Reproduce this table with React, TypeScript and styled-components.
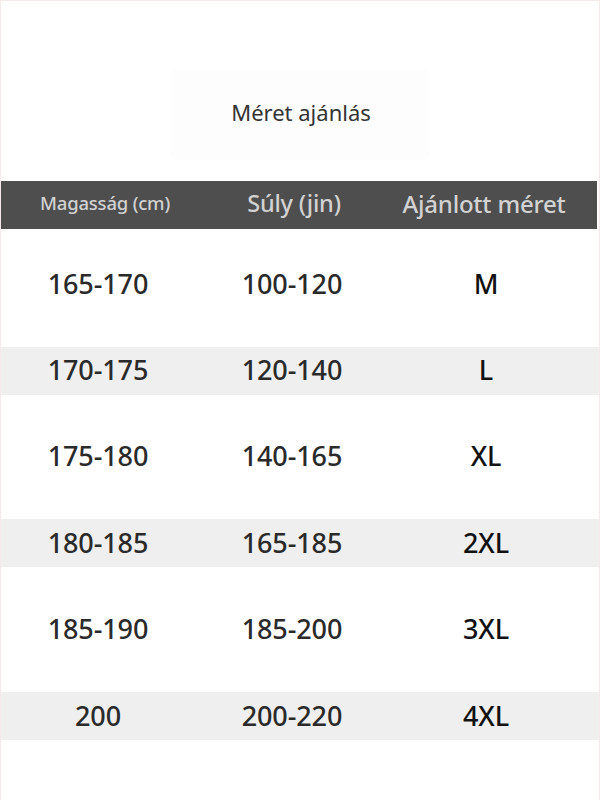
import React from "react";
import styled, { createGlobalStyle } from "styled-components";

const Global = createGlobalStyle`
  html, body { margin: 0; padding: 0; background: #ffffff; }
  body { font-family: "Noto Sans", "Open Sans", sans-serif; }
`;

const Page = styled.div`
  width: 600px;
  height: 800px;
  box-sizing: border-box;
  border: 1px solid #f5e9e9;
  border-bottom: none;
  background: #ffffff;
  overflow: hidden;
  display: flex;
  flex-direction: column;
`;

const TitleWrap = styled.div`
  display: flex;
  justify-content: center;
  padding-top: 69px;
  height: 110px;
  box-sizing: border-box;
`;

const TitleBox = styled.div`
  width: 260px;
  height: 90px;
  background: #fdfdfd;
  border-radius: 6px;
  display: flex;
  align-items: center;
  justify-content: center;
  font-size: 22px;
  color: #333333;
  padding-left: 2px;
  padding-bottom: 6px;
  box-sizing: border-box;
`;

const HeaderBar = styled.div`
  margin-top: 70px;
  height: 48px;
  background: #4e4e4e;
  display: grid;
  grid-template-columns: 194px 194px 194px;
  align-items: center;
  margin-right: 2px;
`;

const HeadCell = styled.div<{ $size: number; $shift?: number }>`
  text-align: center;
  color: #d2d2d2;
  font-size: ${(p) => p.$size}px;
  font-weight: 500;
  letter-spacing: -0.2px;
  transform: translateX(${(p) => p.$shift ?? 0}px);
  line-height: 1;
  padding-bottom: 3px;
`;

const Body = styled.div`
  padding-top: 12px;
  display: flex;
  flex-direction: column;
`;

const Row = styled.div`
  height: 86.4px;
  display: flex;
  align-items: center;
`;

const Band = styled.div<{ $striped: boolean }>`
  flex: 1;
  height: 48px;
  background: ${(p) => (p.$striped ? "#efefef" : "transparent")};
  display: grid;
  grid-template-columns: 194px 194px 194px;
  align-items: center;
`;

const Cell = styled.div<{ $dark?: boolean }>`
  text-align: center;
  font-size: 27px;
  line-height: 1;
  letter-spacing: -0.1px;
  color: ${(p) => (p.$dark ? "#111111" : "#2a2a2a")};
  font-weight: 500;
  padding-bottom: 2px;
`;

const rows = [
  ["165-170", "100-120", "M"],
  ["170-175", "120-140", "L"],
  ["175-180", "140-165", "XL"],
  ["180-185", "165-185", "2XL"],
  ["185-190", "185-200", "3XL"],
  ["200", "200-220", "4XL"],
];

export default function App() {
  return (
    <>
      <Global />
      <Page>
        <TitleWrap>
          <TitleBox>Méret ajánlás</TitleBox>
        </TitleWrap>
        <HeaderBar>
          <HeadCell $size={18.5} $shift={7}>Magasság (cm)</HeadCell>
          <HeadCell $size={23.5} $shift={2}>Súly (jin)</HeadCell>
          <HeadCell $size={24} $shift={-2}>Ajánlott méret</HeadCell>
        </HeaderBar>
        <Body>
          {rows.map((r, i) => (
            <Row key={i}>
              <Band $striped={i % 2 === 1}>
                <Cell>{r[0]}</Cell>
                <Cell>{r[1]}</Cell>
                <Cell $dark>{r[2]}</Cell>
              </Band>
            </Row>
          ))}
        </Body>
      </Page>
    </>
  );
}
